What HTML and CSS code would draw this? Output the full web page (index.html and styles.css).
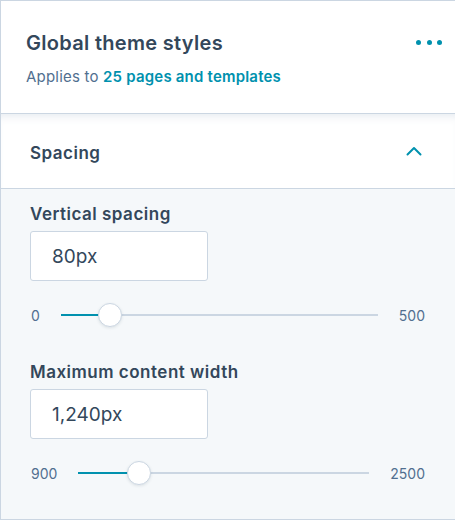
FILE: index.html
```html
<!DOCTYPE html>
<html>
<head>
<meta charset="utf-8">
<link rel="stylesheet" href="styles.css">
</head>
<body>
<div class="panel">
  <header class="head">
    <div class="head-text">
      <h1 class="title">Global theme styles</h1>
      <p class="sub">Applies to <a class="link">25 pages and templates</a></p>
    </div>
    <button class="more" aria-label="More">
      <span class="dot"></span><span class="dot"></span><span class="dot"></span>
    </button>
  </header>
  <section class="section">
    <div class="section-head">
      <span class="section-title">Spacing</span>
      <svg class="chev" width="16" height="10" viewBox="0 0 16 10"><path d="M1.5 8.5 L8 2 L14.5 8.5" fill="none" stroke="#0091ae" stroke-width="2" stroke-linecap="round" stroke-linejoin="round"/></svg>
    </div>
    <div class="section-body">
      <div class="field">
        <label class="label">Vertical spacing</label>
        <div class="input">80px</div>
        <div class="slider">
          <span class="min">0</span>
          <div class="track"><div class="fill" style="width:49px"></div><div class="thumb" style="left:49px"></div></div>
          <span class="max">500</span>
        </div>
      </div>
      <div class="field">
        <label class="label">Maximum content width</label>
        <div class="input">1,240px</div>
        <div class="slider">
          <span class="min">900</span>
          <div class="track"><div class="fill" style="width:61px"></div><div class="thumb" style="left:61px"></div></div>
          <span class="max">2500</span>
        </div>
      </div>
    </div>
  </section>
</div>
</body>
</html>
```
FILE: styles.css
```css
* { box-sizing: border-box; }
html, body { margin: 0; padding: 0; background: #fff; }
body { font-family: Inter, "Liberation Sans", sans-serif; color: #33475b; }
.panel { width: 455px; }
.head {
  display: flex; justify-content: space-between; align-items: flex-start;
  height: 114px; border: 1px solid #cbd6e2; border-right: 0; background: #fff;
  padding: 30px 13px 0 25px;
}
.title { margin: 0; font-size: 20px; font-weight: 600; line-height: 24px; letter-spacing: 0.3px; color: #33475b; }
.sub { margin: 12px 0 0; font-size: 15px; line-height: 20px; letter-spacing: 0.2px; color: #516f90; }
.link { color: #0091ae; font-weight: 600; }
.more { border: 0; background: none; padding: 0; margin-top: 9px; display: flex; gap: 5.5px; }
.dot { width: 5px; height: 5px; border-radius: 50%; background: #0091ae; display: block; }
.section { border-left: 1px solid #cbd6e2; }
.section-head {
  display: flex; justify-content: space-between; align-items: center;
  height: 75px; padding: 3px 33px 0 29px; background: #fff;
  border-bottom: 1px solid #cbd6e2;
  box-shadow: inset 0 8px 8px -6px rgba(203,214,226,0.5);
}
.section-title { font-size: 17px; font-weight: 600; letter-spacing: 0.5px; }
.chev { display: block; margin-top: -3px; }
.section-body {
  background: #f5f8fa; border-bottom: 1px solid #cbd6e2;
  padding: 14px 30px 0 29px; height: 331px;
}
.field { display: flex; flex-direction: column; }
.field + .field { margin-top: 34px; }
.label { font-size: 17px; font-weight: 600; line-height: 22px; letter-spacing: 0.5px; }
.input {
  margin-top: 6px; width: 178px; height: 50px; background: #fff;
  border: 1px solid #cbd6e2; border-radius: 3px; padding: 0 21px;
  display: flex; align-items: center; font-size: 19px; color: #33475b;
}
.slider { display: flex; align-items: center; height: 24px; margin-top: 22px; font-size: 14px; color: #516f90; }
.min { flex: none; margin-left: 1px; }
.track { position: relative; flex: 1; height: 2px; background: #cbd6e2; margin: 0 21px 0 21px; }
.fill { position: absolute; left: 0; top: 0; height: 2px; background: #0091ae; }
.thumb {
  position: absolute; top: -11px; width: 24px; height: 24px; margin-left: -12px;
  border-radius: 50%; background: #fff; border: 1px solid #cbd6e2;
  box-shadow: 0 1px 3px rgba(45,62,80,0.12);
}
```
